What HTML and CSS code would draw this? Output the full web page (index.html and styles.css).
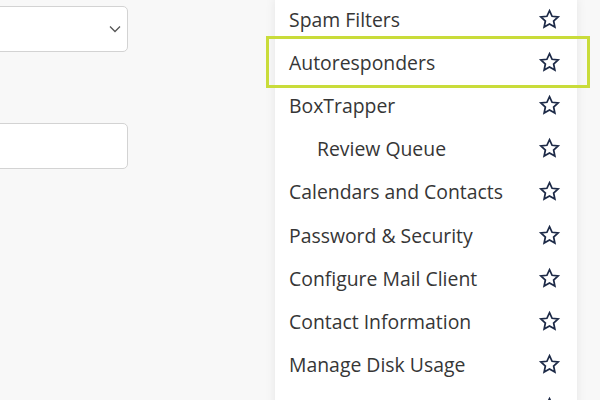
FILE: index.html
```html
<!DOCTYPE html>
<html>
<head>
<meta charset="utf-8">
<link rel="stylesheet" href="styles.css">
</head>
<body>
<div class="page">
  <div class="form">
    <div class="select">
      <svg class="chev" width="12" height="8" viewBox="0 0 12 8"><path d="M1 1.5 L6 6.5 L11 1.5" fill="none" stroke="#555" stroke-width="1.3"/></svg>
    </div>
    <div class="input"></div>
  </div>
  <div class="menu">
    <ul class="list">
      <li class="item"><span>Spam Filters</span><svg class="star" viewBox="0 0 24 24"><path d="M12 2.8l2.7 5.8 6.3.7-4.7 4.3 1.3 6.2L12 16.6l-5.6 3.2 1.3-6.2L3 9.3l6.3-.7z"/></svg></li>
      <li class="item hl"><span>Autoresponders</span><svg class="star" viewBox="0 0 24 24"><path d="M12 2.8l2.7 5.8 6.3.7-4.7 4.3 1.3 6.2L12 16.6l-5.6 3.2 1.3-6.2L3 9.3l6.3-.7z"/></svg></li>
      <li class="item"><span>BoxTrapper</span><svg class="star" viewBox="0 0 24 24"><path d="M12 2.8l2.7 5.8 6.3.7-4.7 4.3 1.3 6.2L12 16.6l-5.6 3.2 1.3-6.2L3 9.3l6.3-.7z"/></svg></li>
      <li class="item sub"><span>Review Queue</span><svg class="star" viewBox="0 0 24 24"><path d="M12 2.8l2.7 5.8 6.3.7-4.7 4.3 1.3 6.2L12 16.6l-5.6 3.2 1.3-6.2L3 9.3l6.3-.7z"/></svg></li>
      <li class="item"><span>Calendars and Contacts</span><svg class="star" viewBox="0 0 24 24"><path d="M12 2.8l2.7 5.8 6.3.7-4.7 4.3 1.3 6.2L12 16.6l-5.6 3.2 1.3-6.2L3 9.3l6.3-.7z"/></svg></li>
      <li class="item"><span>Password &amp; Security</span><svg class="star" viewBox="0 0 24 24"><path d="M12 2.8l2.7 5.8 6.3.7-4.7 4.3 1.3 6.2L12 16.6l-5.6 3.2 1.3-6.2L3 9.3l6.3-.7z"/></svg></li>
      <li class="item"><span>Configure Mail Client</span><svg class="star" viewBox="0 0 24 24"><path d="M12 2.8l2.7 5.8 6.3.7-4.7 4.3 1.3 6.2L12 16.6l-5.6 3.2 1.3-6.2L3 9.3l6.3-.7z"/></svg></li>
      <li class="item"><span>Contact Information</span><svg class="star" viewBox="0 0 24 24"><path d="M12 2.8l2.7 5.8 6.3.7-4.7 4.3 1.3 6.2L12 16.6l-5.6 3.2 1.3-6.2L3 9.3l6.3-.7z"/></svg></li>
      <li class="item"><span>Manage Disk Usage</span><svg class="star" viewBox="0 0 24 24"><path d="M12 2.8l2.7 5.8 6.3.7-4.7 4.3 1.3 6.2L12 16.6l-5.6 3.2 1.3-6.2L3 9.3l6.3-.7z"/></svg></li>
      <li class="item"><span>Email Filters</span><svg class="star" viewBox="0 0 24 24"><path d="M12 2.8l2.7 5.8 6.3.7-4.7 4.3 1.3 6.2L12 16.6l-5.6 3.2 1.3-6.2L3 9.3l6.3-.7z"/></svg></li>
    </ul>
  </div>
</div>
</body>
</html>
```

FILE: styles.css
```css
html, body {
  margin: 0;
  padding: 0;
  background: #f8f8f8;
  overflow: hidden;
  height: 400px;
}
.page {
  display: flex;
  align-items: flex-start;
  width: 600px;
  height: 400px;
  overflow: hidden;
  font-family: "Open Sans", sans-serif;
}
.form {
  display: flex;
  flex-direction: column;
  gap: 71px;
  width: 200px;
  margin-left: -72px;
  padding-top: 6px;
  flex-shrink: 0;
}
.select, .input {
  box-sizing: border-box;
  height: 46px;
  background: #fff;
  border: 1px solid #d3d3d3;
  border-radius: 5px;
}
.select {
  display: flex;
  align-items: center;
  justify-content: flex-end;
  padding-right: 6px;
}
.chev { display: block; }
.menu {
  width: 302px;
  margin-left: 147px;
  margin-top: -2px;
  background: #fff;
  box-shadow: 0 0 10px rgba(0,0,0,0.08);
  flex-shrink: 0;
}
.list {
  list-style: none;
  margin: 0;
  padding: 0;
}
.item {
  position: relative;
  display: flex;
  align-items: center;
  justify-content: space-between;
  height: 43.1px;
  padding: 0 16px 0 14px;
  font-size: 19.4px;
  color: #363636;
}
.item.sub { padding-left: 42px; }
.item.hl::after {
  content: "";
  position: absolute;
  left: -9px;
  right: -13px;
  top: -5px;
  bottom: -4px;
  border: 3px solid #c9dc3a;
  pointer-events: none;
}
.star {
  width: 23px;
  height: 23px;
  flex-shrink: 0;
  fill: none;
  stroke: #1d2a47;
  stroke-width: 1.8;
  stroke-linejoin: miter;
}
```
